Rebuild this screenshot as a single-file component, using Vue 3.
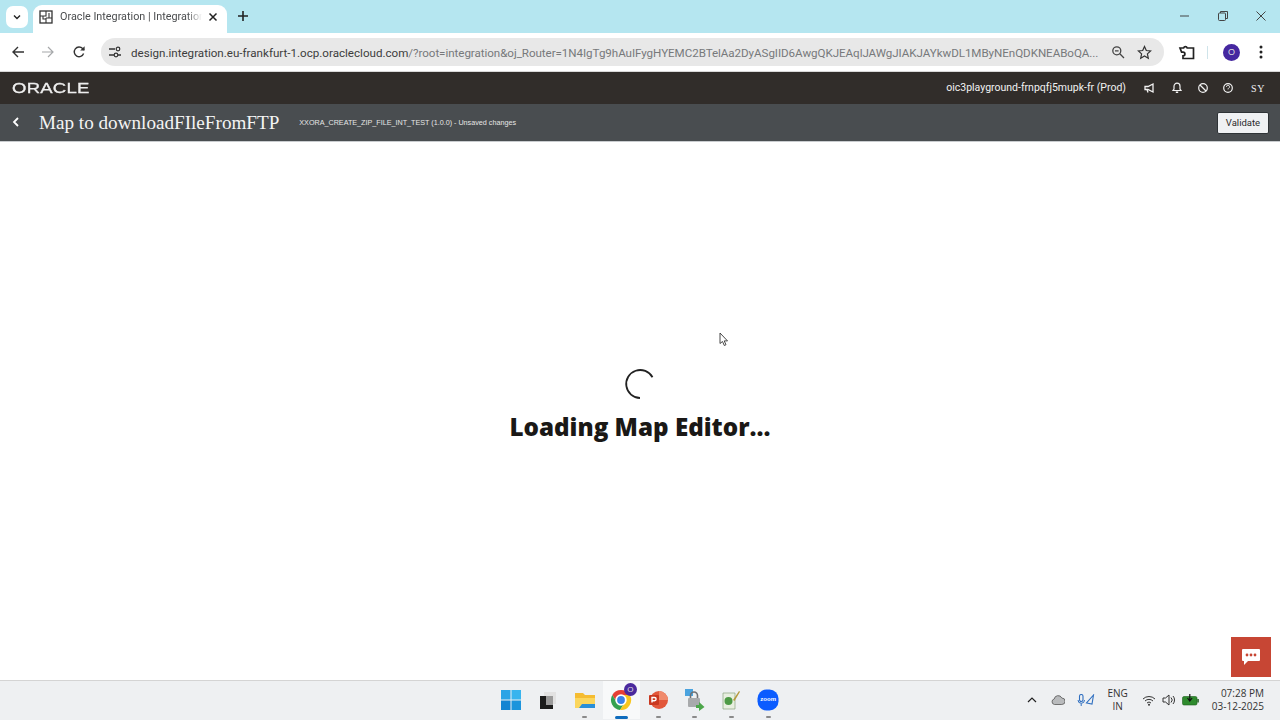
<template>
  <div class="screen">
    <div class="tabstrip">
      <button class="tab-menu">
        <svg width="10" height="10" viewBox="0 0 10 10"><path d="M2 3.5 5 6.5 8 3.5" fill="none" stroke="#222" stroke-width="1.4"/></svg>
      </button>
      <div class="tab">
        <svg class="favicon" width="14" height="14" viewBox="0 0 14 14"><rect x="1" y="1" width="12" height="12" fill="none" stroke="#333" stroke-width="1.3"/><path d="M7 1v5H1M7 8v5M7 8h6M4 6v3h3M10 3v5" fill="none" stroke="#333" stroke-width="1.1"/></svg>
        <span class="tab-title">Oracle Integration | Integrations</span>
        <svg class="tab-x" width="10" height="10" viewBox="0 0 10 10"><path d="M1.5 1.5 8.5 8.5M8.5 1.5 1.5 8.5" stroke="#222" stroke-width="1.5"/></svg>
      </div>
      <svg class="plus" width="12" height="12" viewBox="0 0 12 12"><path d="M6 1v10M1 6h10" stroke="#222" stroke-width="1.6"/></svg>
      <div class="win-controls">
        <svg width="12" height="12" viewBox="0 0 12 12"><path d="M1 6h9" stroke="#444" stroke-width="1"/></svg>
        <svg width="12" height="12" viewBox="0 0 12 12"><rect x="1.5" y="3" width="7" height="7.5" rx="1" fill="none" stroke="#444"/><path d="M3.5 3V1.5h7v7H8.5" fill="none" stroke="#444"/></svg>
        <svg width="12" height="12" viewBox="0 0 12 12"><path d="M1.5 1.5 10.5 10.5M10.5 1.5 1.5 10.5" stroke="#444" stroke-width="1"/></svg>
      </div>
    </div>

    <div class="toolbar">
      <svg class="nav" width="14" height="14" viewBox="0 0 14 14"><path d="M13 7H2M7 2 2 7l5 5" fill="none" stroke="#333" stroke-width="1.4"/></svg>
      <svg class="nav" width="14" height="14" viewBox="0 0 14 14"><path d="M1 7h11M7 2l5 5-5 5" fill="none" stroke="#a6a8aa" stroke-width="1.2"/></svg>
      <svg class="nav" width="14" height="14" viewBox="0 0 14 14"><path d="M11.6 8.5A4.8 4.8 0 1 1 10.6 3.6L12 5" fill="none" stroke="#333" stroke-width="1.4"/><path d="M12.6 1.2v4.4H8.2z" fill="#333"/></svg>
      <div class="omnibox">
        <svg class="site" width="14" height="14" viewBox="0 0 14 14"><path d="M1 4h6M10 10h3M1 10h5" stroke="#333" stroke-width="1.4"/><circle cx="10" cy="4" r="1.8" fill="none" stroke="#333" stroke-width="1.2"/><circle cx="8" cy="10" r="1.8" fill="none" stroke="#333" stroke-width="1.2"/></svg>
        <span class="url">design.integration.eu-frankfurt-1.ocp.oraclecloud.com<span class="url-rest">/?root=integration&amp;oj_Router=1N4IgTg9hAuIFygHYEMC2BTelAa2DyASgIID6AwgQKJEAqlJAWgJIAKJAYkwDL1MByNEnQDKNEABoQA...</span></span>
        <svg class="omni-icon" width="14" height="14" viewBox="0 0 14 14"><circle cx="5.8" cy="5.8" r="4" fill="none" stroke="#444" stroke-width="1.3"/><path d="M8.8 8.8 13 13M4 5.8h3.6" stroke="#444" stroke-width="1.3"/></svg>
        <svg class="omni-icon star" width="15" height="15" viewBox="0 0 15 15"><path d="M7.5 1.5 9.3 5.5l4.3.5-3.2 2.9.9 4.3-3.8-2.2-3.8 2.2.9-4.3L1.4 6l4.3-.5z" fill="none" stroke="#333" stroke-width="1.2"/></svg>
      </div>
      <svg class="ext" width="18" height="18" viewBox="0 0 18 18"><path d="M2 5h3.600a1.900 1.900 0 0 1 3.600 0h6.300v10.500H5v-2.600a1.900 1.900 0 0 0 0-3.800H3.600z" fill="none" stroke="#222" stroke-width="1.700"/></svg>
      <span class="tool-sep"></span>
      <span class="avatar">O</span>
      <svg class="kebab" width="4" height="14" viewBox="0 0 4 14"><circle cx="2" cy="2" r="1.5" fill="#222"/><circle cx="2" cy="7" r="1.5" fill="#222"/><circle cx="2" cy="12" r="1.5" fill="#222"/></svg>
    </div>

    <header class="brand-bar">
      <span class="logo">ORACLE</span>
      <span class="instance">oic3playground-frnpqfj5mupk-fr (Prod)</span>
      <div class="brand-icons">
        <svg width="12" height="12" viewBox="0 0 12 12"><path d="M2 4.5h3L10 2v8L5 7.5H2zM4 7.5 5 10.5" fill="none" stroke="#f2f2f2" stroke-width="1.3"/></svg>
        <svg width="12" height="12" viewBox="0 0 12 12"><path d="M6 1.2a3 3 0 0 1 3 3V7l1 1.5H2L3 7V4.200a3 3 0 0 1 3-3z" fill="none" stroke="#f2f2f2" stroke-width="1.200"/><rect x="4.800" y="9.500" width="2.400" height="1.500" fill="#f2f2f2"/></svg>
        <svg width="12" height="12" viewBox="0 0 12 12"><circle cx="6" cy="6" r="4.300" fill="none" stroke="#f2f2f2" stroke-width="1.200"/><path d="M3 3l6 6" stroke="#f2f2f2" stroke-width="1.200"/></svg>
        <svg width="12" height="12" viewBox="0 0 12 12"><circle cx="6" cy="6" r="4.300" fill="none" stroke="#f2f2f2" stroke-width="1.200"/><path d="M4.500 4.800a1.500 1.500 0 1 1 2.200 1.300L6 6.800v.6" fill="none" stroke="#f2f2f2"/></svg>
        <span class="user">SY</span>
      </div>
    </header>

    <div class="title-bar">
      <svg class="back" width="8" height="10" viewBox="0 0 8 10"><path d="M6 1 2 5l4 4" fill="none" stroke="#fff" stroke-width="1.800"/></svg>
      <h1 class="map-title">Map to downloadFIleFromFTP</h1>
      <span class="map-meta">XXORA_CREATE_ZIP_FILE_INT_TEST (1.0.0) - Unsaved changes</span>
      <button class="validate">Validate</button>
    </div>

    <main class="content">
      <svg class="spinner" width="32" height="32" viewBox="0 0 32 32"><path d="M28.500 9.300A14 14 0 1 0 16 30" fill="none" stroke="#222" stroke-width="1.800"/></svg>
      <div class="loading">Loading Map Editor...</div>
      <svg class="cursor" width="10" height="15" viewBox="0 0 10 15"><path d="M1 1v10.500l2.500-2 1.800 4 1.700-.8-1.800-3.800H8.500z" fill="#fff" stroke="#333" stroke-width=".9"/></svg>
      <div class="chat">
        <svg width="20" height="18" viewBox="0 0 20 18"><path d="M2 1h16a1 1 0 0 1 1 1v10a1 1 0 0 1-1 1H7l-4 4v-4H2a1 1 0 0 1-1-1V2a1 1 0 0 1 1-1z" fill="#fff"/><circle cx="6" cy="7" r="1.400" fill="#c74634"/><circle cx="10" cy="7" r="1.400" fill="#c74634"/><circle cx="14" cy="7" r="1.400" fill="#c74634"/></svg>
      </div>
    </main>

    <footer class="taskbar">
      <div class="task-apps">
        <div class="app">
          <svg width="20" height="20" viewBox="0 0 20 20"><rect width="9.500" height="9.500" fill="#2aa4e6"/><rect x="10.500" width="9.500" height="9.500" fill="#38b4ee"/><rect y="10.500" width="9.500" height="9.500" fill="#1484d2"/><rect x="10.500" y="10.500" width="9.500" height="9.500" fill="#1c94dc"/></svg>
        </div>
        <div class="app">
          <svg width="20" height="20" viewBox="0 0 20 20"><rect x="6" y="2" width="12" height="12" fill="#e2e2e2"/><rect x="2" y="6" width="13" height="13" fill="#9a9a9a"/><path d="M2 6h6v9h7v4H2z" fill="#1c1c1c"/></svg>
        </div>
        <div class="app has-dot">
          <svg width="20" height="20" viewBox="0 0 20 20"><path d="M0 3h8l2 2h10v13H0z" fill="#f5bc31"/><path d="M0 8h20v10H0z" fill="#fbd65c"/><path d="M7 14h13v4H4z" fill="#2a8fd8"/></svg>
        </div>
        <div class="app active">
          <svg width="22" height="22" viewBox="0 0 22 22"><path d="M11 1a10 10 0 0 1 8.700 5H11z" fill="#e53f34"/><path d="M11 1A10 10 0 0 0 2.300 6L6 12 11 6z" fill="#e53f34"/><path d="M2.300 6A10 10 0 0 0 10 21l4-6-8-3z" fill="#33a14f"/><path d="M19.700 6H11l3 9-4 6A10 10 0 0 0 19.700 6z" fill="#f8c61e"/><circle cx="11" cy="11" r="4.800" fill="#3b82e8" stroke="#fff" stroke-width="1.800"/></svg>
          <span class="badge">O</span>
          <span class="active-line"></span>
        </div>
        <div class="app has-dot">
          <svg width="20" height="20" viewBox="0 0 20 20"><circle cx="11" cy="10" r="9" fill="#e2573a"/><path d="M11 1a9 9 0 0 1 9 9H11z" fill="#f08a6c"/><rect x="1" y="5" width="10" height="10" rx="1" fill="#c9381f"/><path d="M4 12.500V7.500h2.500a1.500 1.500 0 0 1 0 3.200H4" fill="none" stroke="#fff" stroke-width="1.400"/></svg>
        </div>
        <div class="app has-dot">
          <svg width="20" height="22" viewBox="0 0 20 22"><rect x="0" y="0" width="8" height="7" fill="#4aa3df"/><rect x="3" y="9" width="12" height="9" rx="1" fill="#a8aaac"/><path d="M5.500 9V6.500a3.500 3.500 0 0 1 7 0V9" fill="none" stroke="#6f7173" stroke-width="1.600"/><path d="M11 16l3 0 0-3 5.500 5-5.500 4v-3h-3z" fill="#4ca64a"/></svg>
        </div>
        <div class="app has-dot">
          <svg width="20" height="20" viewBox="0 0 20 20"><path d="M2 3h12v16H2z" fill="#e8efe0" stroke="#8aa57e" stroke-width=".7"/><circle cx="7.500" cy="11" r="4" fill="#4d9a45"/><path d="M12 10 18 1l1 .7-5.500 9.300z" fill="#b69a3d"/></svg>
        </div>
        <div class="app has-dot">
          <svg width="22" height="22" viewBox="0 0 22 22"><rect x=".5" y=".5" width="21" height="21" rx="9" fill="#0b5cff"/></svg>
          <span class="zoom-text">zoom</span>
        </div>
      </div>
      <div class="tray">
        <svg width="10" height="6" viewBox="0 0 10 6"><path d="M1 5 5 1l4 4" fill="none" stroke="#222" stroke-width="1.200"/></svg>
        <svg width="14" height="10" viewBox="0 0 14 10"><path d="M3.500 9.500a2.800 2.800 0 0 1-.3-5.500A4 4 0 0 1 10.800 3a3.200 3.200 0 0 1 0 6.500z" fill="#b9bbbd" stroke="#555" stroke-width=".8"/></svg>
        <svg width="18" height="13" viewBox="0 0 18 13"><rect x="2.500" y="0.500" width="3.500" height="7" rx="1.700" fill="none" stroke="#2f6fc0" stroke-width="1.100"/><path d="M1 6a3.200 3.200 0 0 0 6.500 0M4.200 9.500V12" fill="none" stroke="#2f6fc0"/><path d="M16.500 1 9.500 9l5.500 1z" fill="none" stroke="#2f6fc0" stroke-width="1.100"/></svg>
        <div class="lang"><span>ENG</span><span>IN</span></div>
        <svg width="14" height="11" viewBox="0 0 14 11"><path d="M1 4a8.500 8.500 0 0 1 12 0M3 6a5.700 5.700 0 0 1 8 0M5 8a2.800 2.800 0 0 1 4 0" fill="none" stroke="#333"/><circle cx="7" cy="9.800" r="1" fill="#333"/></svg>
        <svg width="14" height="12" viewBox="0 0 14 12"><path d="M1 4h2.500L7 1v10L3.500 8H1z" fill="none" stroke="#333"/><path d="M9 3.500a3.500 3.500 0 0 1 0 5M11 2a6 6 0 0 1 0 8" fill="none" stroke="#333"/></svg>
        <svg width="17" height="12" viewBox="0 0 17 12"><rect x="0.500" y="2.500" width="14.500" height="8.500" rx="1.500" fill="#2e8b2e" stroke="#1d5e1d" stroke-width=".6"/><rect x="15.300" y="5" width="1.500" height="3.500" fill="#1d5e1d"/><path d="M7.800 0v6M5.500 4l2.300 3 2.300-3" fill="none" stroke="#111" stroke-width="1.200"/></svg>
        <div class="clock"><span>07:28 PM</span><span>03-12-2025</span></div>
      </div>
    </footer>
  </div>
</template>

<script setup>
</script>

<style>
html, body { margin: 0; padding: 0; }
</style>

<style scoped>
.screen {
  width: 1280px;
  height: 720px;
  display: flex;
  flex-direction: column;
  overflow: hidden;
  background: #fff;
  font-family: "Liberation Sans", Arial, sans-serif;
}
.tabstrip {
  height: 33px;
  flex: none;
  display: flex;
  align-items: center;
  background: #b5e6f0;
  padding-left: 6px;
  box-sizing: border-box;
}
.tab-menu {
  width: 22px;
  height: 22px;
  border: 0;
  padding: 0;
  border-radius: 7px;
  background: #fff;
  display: flex;
  align-items: center;
  justify-content: center;
  margin-top: 1px;
}
.tab {
  width: 194px;
  height: 28px;
  margin-left: 5px;
  margin-top: 5px;
  background: #fff;
  border-radius: 9px 9px 0 0;
  display: flex;
  align-items: center;
  padding: 0 9px 5px 6px;
  box-sizing: border-box;
}
.favicon { margin-right: 7px; flex: none; }
.tab-title {
  font-size: 10.800px;
  color: #4a4c4e;
  width: 148px;
  flex: none;
  white-space: nowrap;
  font-family: "Roboto", sans-serif;
  -webkit-mask-image: linear-gradient(to right, #000 86%, transparent 96%);
  mask-image: linear-gradient(to right, #000 86%, transparent 96%);
}
.tab-x { margin-left: 0; flex: none; }
.plus { margin-left: 10px; margin-top: -1px; }
.win-controls {
  margin-left: auto;
  display: flex;
  gap: 26px;
  padding-right: 13px;
  margin-top: -1px;
}
.toolbar {
  height: 39px;
  flex: none;
  background: #fff;
  display: flex;
  align-items: center;
  padding-left: 11px;
  box-sizing: border-box;
  border-top-left-radius: 8px;
  border-bottom: 1px solid #d8d8d8;
}
.nav { margin-right: 16px; }
.nav:nth-child(2) { margin-right: 17px; }
.nav:nth-child(3) { margin-right: 15px; }
.omnibox {
  width: 1063px;
  height: 28px;
  border-radius: 14px;
  background: #e8e8e8;
  display: flex;
  align-items: center;
  padding: 1px 12px 0 7px;
  box-sizing: border-box;
  flex: none;
}
.site { flex: none; margin-top: -1px; }
.url {
  margin-left: 9px;
  flex: none;
  white-space: nowrap;
  font-size: 11.600px;
  color: #3c3c3c;
  font-family: "Roboto", sans-serif;
}
.url-rest { color: #77797b; letter-spacing: -.05px; }
.omni-icon { flex: none; margin-left: auto; margin-top: -1px; }
.star { margin-left: 12px; }
.ext { margin-left: 14px; flex: none; }
.tool-sep { width: 1px; height: 13px; background: #cfe4ea; margin-left: 11px; }
.avatar {
  margin-left: 15px;
  width: 17px;
  height: 17px;
  border-radius: 50%;
  background: #4527a0;
  color: #ddd;
  font-size: 9px;
  display: flex;
  align-items: center;
  justify-content: center;
  flex: none;
}
.kebab { margin-left: 19px; flex: none; }
.brand-bar {
  height: 32px;
  flex: none;
  background: #312d2a;
  display: flex;
  align-items: center;
  padding: 0 15px 0 12px;
  box-sizing: border-box;
  color: #f2f2f2;
}
.logo {
  font-size: 14px;
  width: 50px;
  letter-spacing: .2px;
  -webkit-text-stroke: .3px #eee;
  transform: scaleX(1.32);
  transform-origin: left center;
  color: #eee;
}
.instance {
  margin-left: auto;
  font-size: 10.500px;
  font-family: "Roboto", sans-serif;
  margin-top: -1px;
}
.brand-icons {
  display: flex;
  align-items: center;
  gap: 14px;
  margin-left: 17px;
}
.brand-icons svg:nth-child(1) { margin-right: 2px; }
.brand-icons svg:nth-child(4) { margin-left: -1px; margin-right: 2px; }
.user { font-family: "Liberation Serif", serif; font-size: 10px; letter-spacing: .6px; margin-left: 1px; }
.title-bar {
  height: 38px;
  flex: none;
  background: #494d50;
  display: flex;
  align-items: center;
  padding: 0 11px 0 12px;
  box-sizing: border-box;
  border-bottom: 1px solid #c9cccf;
  color: #fff;
}
.back { flex: none; margin-top: -2px; }
.map-title {
  margin: 0 0 0 19px;
  font-family: "Liberation Serif", serif;
  font-weight: 400;
  font-size: 19.150px;
  color: #f4f4f4;
  white-space: nowrap;
}
.map-meta {
  margin-left: 20px;
  font-size: 7.200px;
  color: #e6e6e6;
  white-space: nowrap;
}
.validate {
  margin-left: auto;
  width: 52px;
  height: 22px;
  padding: 0;
  background: #eff1f3;
  border: 1px solid #2e3336;
  border-radius: 2px;
  font-family: "Roboto", sans-serif;
  font-size: 9.500px;
  color: #2a2a2a;
}
.content {
  flex: 1;
  position: relative;
  background: #fff;
  display: flex;
  flex-direction: column;
  align-items: center;
  padding-top: 226px;
  box-sizing: border-box;
}
.spinner { flex: none; }
.loading {
  margin-top: 10px;
  font-family: "Open Sans", sans-serif;
  font-weight: 800;
  font-size: 24.200px;
  line-height: 34px;
  color: #1a1816;
}
.cursor { position: absolute; left: 719px; top: 190px; }
.chat {
  position: absolute;
  left: 1231px;
  top: 495px;
  width: 40px;
  height: 40px;
  background: #c74634;
  display: flex;
  align-items: center;
  justify-content: center;
}
.taskbar {
  height: 40px;
  flex: none;
  background: #eef0f2;
  border-top: 1px solid #d4d4d4;
  box-sizing: border-box;
  display: flex;
  align-items: center;
  padding-bottom: 1px;
  position: relative;
}
.task-apps {
  margin-left: 493px;
  display: flex;
}
.app {
  width: 36.700px;
  height: 38px;
  display: flex;
  align-items: center;
  justify-content: center;
  position: relative;
}
.app.active { background: #f8f9fa; }
.has-dot::after {
  content: "";
  position: absolute;
  bottom: 1px;
  left: 16px;
  width: 5px;
  height: 2px;
  border-radius: 1px;
  background: #8a8a8a;
}
.active-line {
  position: absolute;
  bottom: 0;
  left: 12px;
  width: 13px;
  height: 3px;
  border-radius: 2px;
  background: #0f6cbd;
}
.badge {
  position: absolute;
  top: 2px;
  right: 3px;
  width: 13px;
  height: 13px;
  border-radius: 50%;
  background: #4b2a9e;
  color: #ddd;
  font-size: 8px;
  display: flex;
  align-items: center;
  justify-content: center;
}
.zoom-text {
  position: absolute;
  left: 0;
  right: 0;
  top: 15px;
  text-align: center;
  font-size: 6px;
  font-weight: 700;
  color: #fff;
}
.tray {
  margin-left: auto;
  display: flex;
  align-items: center;
  padding-right: 16px;
}
.tray > svg:nth-child(1) { margin-right: 14px; }
.tray > svg:nth-child(2) { margin-right: 12px; }
.tray > svg:nth-child(3) { margin-right: 12px; }
.tray > svg:nth-child(5) { margin-right: 6px; }
.tray > svg:nth-child(6) { margin-right: 6px; }
.lang {
  display: flex;
  flex-direction: column;
  align-items: center;
  font-size: 10px;
  line-height: 13px;
  color: #333;
  margin-right: 14px;
  font-family: "Open Sans", sans-serif;
}
.clock {
  display: flex;
  flex-direction: column;
  align-items: flex-end;
  margin-left: 13px;
  font-size: 10px;
  line-height: 13px;
  color: #333;
  font-family: "Open Sans", sans-serif;
}
</style>
